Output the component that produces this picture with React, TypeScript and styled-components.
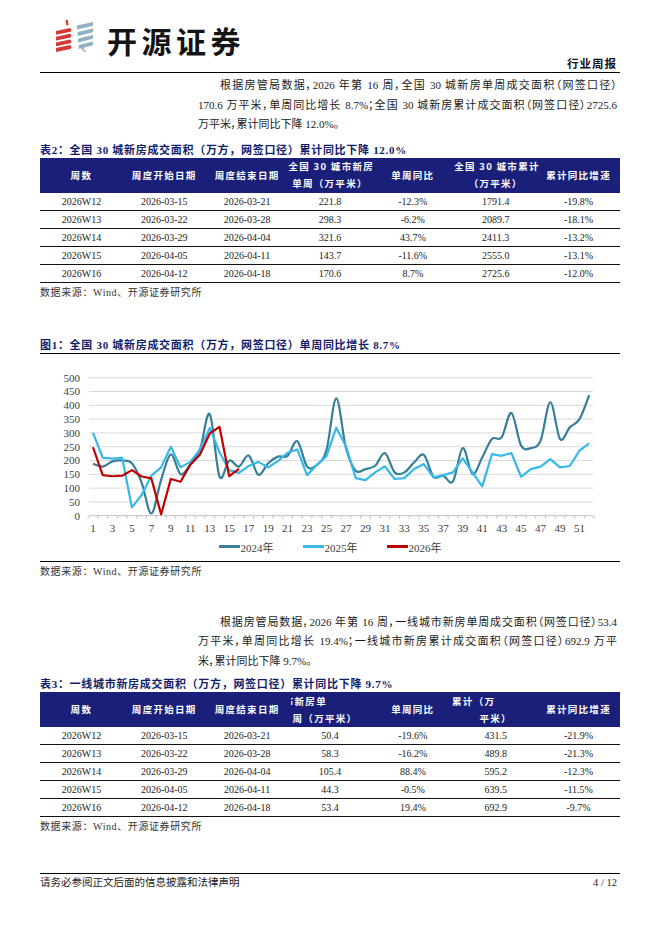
import React from 'react';
import styled, { createGlobalStyle } from 'styled-components';

const SERIF = `"Liberation Serif", "Noto Sans CJK SC", serif`;
const CJK = `"Noto Sans CJK SC", sans-serif`;
const NAVY_BG = '#1a2079';
const NAVY_TEXT = '#101c6c';

const GlobalStyle = createGlobalStyle`
  html, body { margin: 0; padding: 0; background: #fff; }
  body { font-family: ${SERIF}; color: #1a1a1a; }
`;

const Page = styled.div`
  width: 662px;
  height: 936px;
  box-sizing: border-box;
  padding: 0 42px 0 40px;
  display: flex;
  flex-direction: column;
`;

const Header = styled.header`
  height: 73px;
  box-sizing: border-box;
  border-bottom: 1px solid #000;
  display: flex;
  justify-content: space-between;
  align-items: flex-end;
`;

const Brand = styled.div`
  align-self: flex-start;
  margin-top: 19px;
  margin-left: 13px;
  display: flex;
  align-items: flex-start;
  gap: 6px;
`;

const BrandName = styled.span`
  margin-top: 3px;
  font-family: ${CJK};
  font-weight: 700;
  font-size: 30px;
  line-height: 36px;
  letter-spacing: 4.5px;
  color: #141414;
`;

const ReportType = styled.span`
  font-family: ${CJK};
  font-weight: 700;
  font-size: 11.5px;
  line-height: 14px;
  letter-spacing: 1px;
  margin: 0 3px 2px 0;
  color: #111;
`;

const Para = styled.div<{ $top: number }>`
  margin: ${(p) => p.$top}px 3px 0 158px;
  font-size: 11px;
  line-height: 19.5px;
  color: #1a1a1a;
  font-feature-settings: 'palt';
`;

const ParaLine = styled.div<{ $indent?: boolean; $last?: boolean }>`
  padding-left: ${(p) => (p.$indent ? 22 : 0)}px;
  text-align: justify;
  text-align-last: ${(p) => (p.$last ? 'left' : 'justify')};
`;

const Title = styled.div<{ $top: number; $rule?: boolean }>`
  margin-top: ${(p) => p.$top}px;
  font-weight: 700;
  font-size: 11px;
  line-height: 16px;
  letter-spacing: 0.7px;
  color: ${NAVY_TEXT};
  border-bottom: ${(p) => (p.$rule ? '1px solid #000' : 'none')};
`;

const DataTable = styled.table`
  width: 100%;
  border-collapse: collapse;
  table-layout: fixed;
  font-family: ${SERIF};
  font-size: 10px;
  color: #222;
`;

const Th = styled.th`
  background: ${NAVY_BG};
  color: #fff;
  font-family: ${CJK};
  font-weight: 700;
  font-size: 9.5px;
  letter-spacing: 1.3px;
  height: 35px;
  padding: 0;
  text-align: center;
  vertical-align: middle;
  line-height: 17px;
`;

const HeadLine = styled.div<{ $dx?: number }>`
  transform: translateX(${(p) => p.$dx ?? 0}px);
  white-space: nowrap;
`;

const ClipLine = styled.div<{ $w: number; $dx: number }>`
  display: flex;
  justify-content: flex-end;
  overflow: hidden;
  width: ${(p) => p.$w}px;
  margin: 0 auto;
  transform: translateX(${(p) => p.$dx}px);
  white-space: nowrap;
`;

const Td = styled.td`
  height: 17px;
  padding: 0;
  border-bottom: 1px solid #111;
  text-align: center;
  vertical-align: middle;
  line-height: 17px;
`;

const Source = styled.div`
  margin-top: 2px;
  font-size: 10px;
  line-height: 16px;
  letter-spacing: 0.6px;
  color: #333;
`;

const ChartFrame = styled.div`
  border-bottom: 1px solid #000;
  padding-bottom: 6px;
  display: flex;
  flex-direction: column;
`;

const ChartSvg = styled.svg`
  display: block;
  width: 580px;
  height: 185px;
  font-family: ${SERIF};
`;

const Legend = styled.div`
  display: flex;
  justify-content: center;
  align-items: center;
  gap: 29px;
  height: 16px;
`;

const LegendItem = styled.div`
  display: flex;
  align-items: center;
  gap: 1px;
  font-size: 11px;
  color: #404040;
`;

const Swatch = styled.span<{ $color: string }>`
  display: inline-block;
  width: 21px;
  height: 2.5px;
  background: ${(p) => p.$color};
`;

const Footer = styled.footer`
  margin-top: auto;
  margin-bottom: 46px;
  border-top: 1.5px solid #000;
  padding-top: 2px;
  display: flex;
  justify-content: space-between;
  font-size: 10.5px;
  line-height: 14px;
  color: #222;
`;

const FooterPage = styled.span`
  margin-right: 3px;
`;

/* ---------- data ---------- */

type Row = [string, string, string, string, string, string, string];

const rows2: Row[] = [
  ['2026W12', '2026-03-15', '2026-03-21', '221.8', '-12.3%', '1791.4', '-19.8%'],
  ['2026W13', '2026-03-22', '2026-03-28', '298.3', '-6.2%', '2089.7', '-18.1%'],
  ['2026W14', '2026-03-29', '2026-04-04', '321.6', '43.7%', '2411.3', '-13.2%'],
  ['2026W15', '2026-04-05', '2026-04-11', '143.7', '-11.6%', '2555.0', '-13.1%'],
  ['2026W16', '2026-04-12', '2026-04-18', '170.6', '8.7%', '2725.6', '-12.0%'],
];

const rows3: Row[] = [
  ['2026W12', '2026-03-15', '2026-03-21', '50.4', '-19.6%', '431.5', '-21.9%'],
  ['2026W13', '2026-03-22', '2026-03-28', '58.3', '-16.2%', '489.8', '-21.3%'],
  ['2026W14', '2026-03-29', '2026-04-04', '105.4', '88.4%', '595.2', '-12.3%'],
  ['2026W15', '2026-04-05', '2026-04-11', '44.3', '-0.5%', '639.5', '-11.5%'],
  ['2026W16', '2026-04-12', '2026-04-18', '53.4', '19.4%', '692.9', '-9.7%'],
];

const s2024 = [188, 178, 197, 200, 190, 120, 8, 130, 222, 150, 185, 240, 368, 142, 200, 178, 218, 148, 190, 214, 217, 270, 178, 184, 238, 425, 245, 163, 169, 181, 227, 157, 157, 193, 220, 141, 145, 124, 245, 151, 211, 278, 284, 372, 254, 245, 272, 411, 278, 320, 350, 437];
const s2025 = [300, 210, 207, 210, 30, 75, 145, 175, 250, 175, 195, 240, 318, 230, 165, 155, 180, 195, 175, 198, 228, 240, 147, 184, 216, 319, 252, 136, 129, 157, 179, 133, 136, 169, 187, 139, 147, 157, 208, 157, 106, 223, 217, 227, 141, 169, 178, 205, 175, 180, 236, 262];
const s2026 = [248, 147, 143, 145, 165, 142, 135, 5, 133, 123, 185, 222, 298, 322, 143, 170];

const STEP = 9.73;
const X0 = 53;
const xOf = (i: number) => X0 + i * STEP;
const yOf = (v: number) => 161.7 - 0.276 * v;

function straightPath(vals: number[]) {
  return vals.map((v, i) => `${i ? 'L' : 'M'}${xOf(i).toFixed(2)} ${yOf(v).toFixed(2)}`).join(' ');
}

function smoothPath(vals: number[]) {
  const pts = vals.map((v, i) => [xOf(i), yOf(v)]);
  let d = `M${pts[0][0].toFixed(2)} ${pts[0][1].toFixed(2)}`;
  for (let i = 0; i < pts.length - 1; i++) {
    const p0 = pts[i - 1] || pts[i];
    const p1 = pts[i];
    const p2 = pts[i + 1];
    const p3 = pts[i + 2] || p2;
    const c1x = p1[0] + (p2[0] - p0[0]) / 6;
    const c1y = p1[1] + (p2[1] - p0[1]) / 6;
    const c2x = p2[0] - (p3[0] - p1[0]) / 6;
    const c2y = p2[1] - (p3[1] - p1[1]) / 6;
    d += ` C${c1x.toFixed(2)} ${c1y.toFixed(2)} ${c2x.toFixed(2)} ${c2y.toFixed(2)} ${p2[0].toFixed(2)} ${p2[1].toFixed(2)}`;
  }
  return d;
}

const C2024 = '#357f98';
const C2025 = '#36b9e8';
const C2026 = '#c00000';

/* ---------- parts ---------- */

function Logo() {
  const red = [9, 14.7, 20.4, 26.1];
  const blue = [3, 9.5, 16, 22.5];
  return (
    <svg width="48" height="34" viewBox="0 0 48 34">
      <path d="M12.5 1.2 L14.6 0.6 L15.6 6 L13.5 6.6 Z" fill="#d63a33" />
      {red.map((y0) => (
        <path
          key={y0}
          d={`M3 ${y0 + 3} L17 ${y0} Q19.6 ${y0 + 1.9} 17.6 ${y0 + 3.8} L3 ${y0 + 6.8} Z`}
          fill="#d63a33"
        />
      ))}
      {blue.map((y0, i) => (
        <path
          key={y0}
          d={`M${24 + i * 0.6} ${y0 + 3.6} L40 ${y0} L40 ${y0 + 3.8} L${24 + i * 0.6} ${y0 + 7.4} Z`}
          fill="#8fb1c2"
        />
      ))}
      <path d="M28 29 Q29 31.5 32 33.5 L33 32.6 Q30.8 31 30.4 28.6 Z" fill="#8fb1c2" />
    </svg>
  );
}

function Chart() {
  const ticks = [0, 50, 100, 150, 200, 250, 300, 350, 400, 450, 500];
  const labels = Array.from({ length: 26 }, (_, k) => 2 * k + 1);
  const bounds = Array.from({ length: 53 }, (_, k) => X0 + (k - 0.5) * STEP);
  return (
    <ChartSvg viewBox="0 0 580 185">
      {ticks.map((t) => (
        <g key={t}>
          {t > 0 && <line x1={49} x2={553} y1={yOf(t)} y2={yOf(t)} stroke="#d9d9d9" strokeWidth={1} />}
          <text x={40} y={yOf(t)} dy="0.35em" textAnchor="end" fontSize={11} fill="#404040">
            {t}
          </text>
        </g>
      ))}
      <line x1={49} x2={553} y1={yOf(0)} y2={yOf(0)} stroke="#bfbfbf" strokeWidth={1} />
      {bounds.map((bx, k) => (
        <line key={k} x1={bx} x2={bx} y1={yOf(0)} y2={yOf(0) + 3} stroke="#bfbfbf" strokeWidth={1} />
      ))}
      {labels.map((n) => (
        <text key={n} x={xOf(n - 1)} y={174} dy="0.35em" textAnchor="middle" fontSize={11} fill="#404040">
          {n}
        </text>
      ))}
      <path d={smoothPath(s2024)} fill="none" stroke={C2024} strokeWidth={2.2} strokeLinejoin="round" />
      <path d={straightPath(s2025)} fill="none" stroke={C2025} strokeWidth={2.2} strokeLinejoin="round" />
      <path d={straightPath(s2026)} fill="none" stroke={C2026} strokeWidth={2.2} strokeLinejoin="round" />
    </ChartSvg>
  );
}

function Body({ rows }: { rows: Row[] }) {
  return (
    <tbody>
      {rows.map((r) => (
        <tr key={r[0]}>
          {r.map((c, i) => (
            <Td key={i}>{c}</Td>
          ))}
        </tr>
      ))}
    </tbody>
  );
}

function Table2() {
  return (
    <DataTable>
      <thead>
        <tr>
          <Th>周数</Th>
          <Th>周度开始日期</Th>
          <Th>周度结束日期</Th>
          <Th>
            <HeadLine>全国 30 城市新房</HeadLine>
            <HeadLine>单周（万平米）</HeadLine>
          </Th>
          <Th>单周同比</Th>
          <Th>
            <HeadLine>全国 30 城市累计</HeadLine>
            <HeadLine>（万平米）</HeadLine>
          </Th>
          <Th>累计同比增速</Th>
        </tr>
      </thead>
      <Body rows={rows2} />
    </DataTable>
  );
}

function Table3() {
  return (
    <DataTable>
      <thead>
        <tr>
          <Th>周数</Th>
          <Th>周度开始日期</Th>
          <Th>周度结束日期</Th>
          <Th>
            <ClipLine $w={36} $dx={-21}>市新房单</ClipLine>
            <HeadLine $dx={-5}>周（万平米）</HeadLine>
          </Th>
          <Th>单周同比</Th>
          <Th>
            <HeadLine $dx={-22}>累计（万</HeadLine>
            <HeadLine $dx={0}>平米）</HeadLine>
          </Th>
          <Th>累计同比增速</Th>
        </tr>
      </thead>
      <Body rows={rows3} />
    </DataTable>
  );
}

export default function App() {
  return (
    <>
      <GlobalStyle />
      <Page>
        <Header>
          <Brand>
            <Logo />
            <BrandName>开源证券</BrandName>
          </Brand>
          <ReportType>行业周报</ReportType>
        </Header>

        <Para $top={3}>
          <ParaLine $indent>根据房管局数据，2026 年第 16 周，全国 30 城新房单周成交面积（网签口径）</ParaLine>
          <ParaLine>170.6 万平米，单周同比增长 8.7%；全国 30 城新房累计成交面积（网签口径）2725.6</ParaLine>
          <ParaLine $last>万平米，累计同比下降 12.0%。</ParaLine>
        </Para>

        <Title $top={7}>表2：全国 30 城新房成交面积（万方，网签口径）累计同比下降 12.0%</Title>
        <Table2 />
        <Source>数据来源：Wind、开源证券研究所</Source>

        <Title $top={36} $rule>
          图1：全国 30 城新房成交面积（万方，网签口径）单周同比增长 8.7%
        </Title>
        <ChartFrame>
          <Chart />
          <Legend>
            <LegendItem>
              <Swatch $color={C2024} />
              2024年
            </LegendItem>
            <LegendItem>
              <Swatch $color={C2025} />
              2025年
            </LegendItem>
            <LegendItem>
              <Swatch $color={C2026} />
              2026年
            </LegendItem>
          </Legend>
        </ChartFrame>
        <Source>数据来源：Wind、开源证券研究所</Source>

        <Para $top={33}>
          <ParaLine $indent>根据房管局数据，2026 年第 16 周，一线城市新房单周成交面积（网签口径）53.4</ParaLine>
          <ParaLine>万平米，单周同比增长 19.4%；一线城市新房累计成交面积（网签口径）692.9 万平</ParaLine>
          <ParaLine $last>米，累计同比下降 9.7%。</ParaLine>
        </Para>

        <Title $top={5}>表3：一线城市新房成交面积（万方，网签口径）累计同比下降 9.7%</Title>
        <Table3 />
        <Source>数据来源：Wind、开源证券研究所</Source>

        <Footer>
          <span>请务必参阅正文后面的信息披露和法律声明</span>
          <FooterPage>4 / 12</FooterPage>
        </Footer>
      </Page>
    </>
  );
}
